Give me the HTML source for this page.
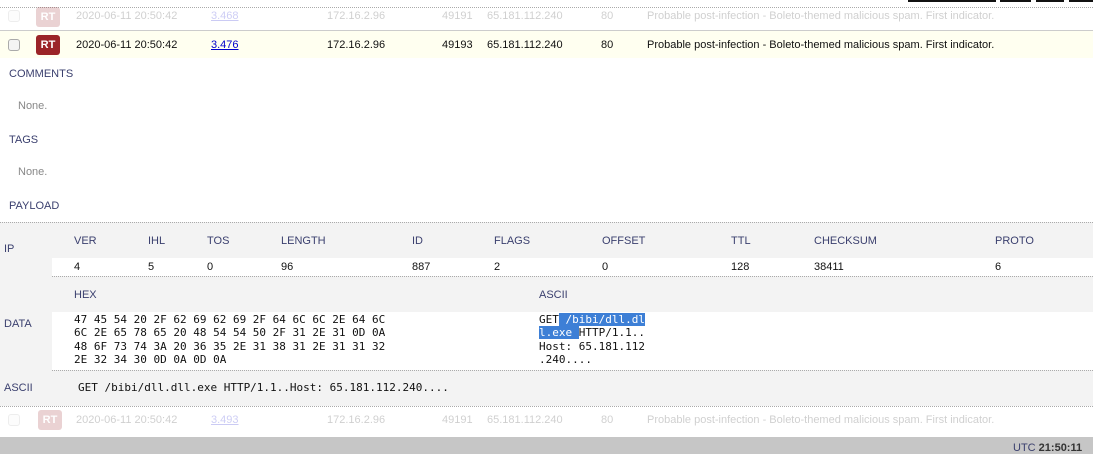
<!DOCTYPE html>
<html><head><meta charset="utf-8"><style>
*{margin:0;padding:0;box-sizing:border-box}
body{width:1093px;height:454px;overflow:hidden;background:#fff;font-family:"Liberation Sans",sans-serif;font-size:11px;color:#111;position:relative}
.a{position:absolute;white-space:nowrap}
.m{font-family:"DejaVu Sans Mono","Liberation Mono",monospace;font-size:11px}
.lb{color:#3a3f6e}
.cb{position:absolute;width:12px;height:12px;border:1px solid #aaa;border-radius:3px;background:#f4f4f4}
.rt{position:absolute;width:24px;height:20px;border-radius:3px;background:#9b2428;color:#fff;font-weight:bold;font-size:11px;text-align:center;line-height:20px}
.f{opacity:.2}
.dot{position:absolute;height:0;border-top:1px dotted #aaa}
</style></head><body>
<div class="a" style="left:908px;top:0;width:88px;height:2px;background:#111"></div>
<div class="a" style="left:1000px;top:0;width:31px;height:2px;background:#111"></div>
<div class="a" style="left:1036px;top:0;width:28px;height:2px;background:#111"></div>
<div class="a" style="left:1069px;top:0;width:24px;height:2px;background:#111"></div>
<div class="dot" style="left:0;top:7px;width:1093px"></div>
<div class="f">
<div class="cb" style="left:8px;top:10px"></div>
<div class="rt" style="left:36px;top:7px">RT</div>
<div class="a" style="left:76px;top:10px">2020-06-11 20:50:42</div>
<div class="a" style="left:211px;top:10px;color:#00c;text-decoration:underline">3.468</div>
<div class="a" style="left:327px;top:10px">172.16.2.96</div>
<div class="a" style="left:442px;top:10px">49191</div>
<div class="a" style="left:487px;top:10px">65.181.112.240</div>
<div class="a" style="left:601px;top:10px">80</div>
<div class="a" style="left:647px;top:10px">Probable post-infection - Boleto-themed malicious spam. First indicator.</div>
</div>
<div class="a" style="left:0;top:30px;width:1093px;height:28px;background:#fffff0;border-top:1px solid #ccc"></div>
<div class="cb" style="left:8px;top:39px"></div>
<div class="rt" style="left:36px;top:35px">RT</div>
<div class="a" style="left:76px;top:39px">2020-06-11 20:50:42</div>
<div class="a" style="left:211px;top:39px;color:#00c;text-decoration:underline">3.476</div>
<div class="a" style="left:327px;top:39px">172.16.2.96</div>
<div class="a" style="left:442px;top:39px">49193</div>
<div class="a" style="left:487px;top:39px">65.181.112.240</div>
<div class="a" style="left:601px;top:39px">80</div>
<div class="a" style="left:647px;top:39px">Probable post-infection - Boleto-themed malicious spam. First indicator.</div>
<div class="a lb" style="left:9px;top:68px">COMMENTS</div>
<div class="a" style="left:18px;top:100px;color:#888">None.</div>
<div class="a lb" style="left:9px;top:134px">TAGS</div>
<div class="a" style="left:18px;top:166px;color:#888">None.</div>
<div class="a lb" style="left:9px;top:200px">PAYLOAD</div>
<div class="a" style="left:0;top:222px;width:1093px;height:184px;background:#f3f3f3"></div>
<div class="dot" style="left:0;top:222px;width:1093px"></div>
<div class="a" style="left:52px;top:258px;width:1041px;height:18px;background:#fff"></div>
<div class="dot" style="left:52px;top:276px;width:1041px"></div>
<div class="a" style="left:52px;top:312px;width:1041px;height:58px;background:#fff"></div>
<div class="dot" style="left:52px;top:370px;width:1041px"></div>
<div class="dot" style="left:0;top:406px;width:1093px"></div>
<div class="a lb" style="left:4px;top:243px">IP</div>
<div class="a lb" style="left:74px;top:235px">VER</div><div class="a lb" style="left:148px;top:235px">IHL</div><div class="a lb" style="left:207px;top:235px">TOS</div><div class="a lb" style="left:281px;top:235px">LENGTH</div><div class="a lb" style="left:412px;top:235px">ID</div><div class="a lb" style="left:494px;top:235px">FLAGS</div><div class="a lb" style="left:602px;top:235px">OFFSET</div><div class="a lb" style="left:731px;top:235px">TTL</div><div class="a lb" style="left:814px;top:235px">CHECKSUM</div><div class="a lb" style="left:995px;top:235px">PROTO</div>
<div class="a" style="left:74px;top:261px">4</div><div class="a" style="left:148px;top:261px">5</div><div class="a" style="left:207px;top:261px">0</div><div class="a" style="left:281px;top:261px">96</div><div class="a" style="left:412px;top:261px">887</div><div class="a" style="left:494px;top:261px">2</div><div class="a" style="left:602px;top:261px">0</div><div class="a" style="left:731px;top:261px">128</div><div class="a" style="left:814px;top:261px">38411</div><div class="a" style="left:995px;top:261px">6</div>
<div class="a lb" style="left:74px;top:289px">HEX</div><div class="a lb" style="left:539px;top:289px">ASCII</div>
<div class="a lb" style="left:4px;top:318px">DATA</div>
<div class="a m" style="left:74px;top:313px;line-height:13.3px">47 45 54 20 2F 62 69 62 69 2F 64 6C 6C 2E 64 6C<br>6C 2E 65 78 65 20 48 54 54 50 2F 31 2E 31 0D 0A<br>48 6F 73 74 3A 20 36 35 2E 31 38 31 2E 31 31 32<br>2E 32 34 30 0D 0A 0D 0A</div>
<div class="a m" style="left:539px;top:313px;line-height:13.3px">GET<span style="background:#3d7fd6;color:#fff"> /bibi/dll.dl </span><br><span style="background:#3d7fd6;color:#fff">l.exe </span>HTTP/1.1..<br>Host: 65.181.112<br>.240....</div>
<div class="a lb" style="left:4px;top:382px">ASCII</div>
<div class="a m" style="left:78px;top:381px">GET /bibi/dll.dll.exe HTTP/1.1..Host: 65.181.112.240....</div>
<div class="f">
<div class="cb" style="left:8px;top:414px"></div>
<div class="rt" style="left:38px;top:410px">RT</div>
<div class="a" style="left:76px;top:414px">2020-06-11 20:50:42</div>
<div class="a" style="left:211px;top:414px;color:#00c;text-decoration:underline">3.493</div>
<div class="a" style="left:327px;top:414px">172.16.2.96</div>
<div class="a" style="left:442px;top:414px">49191</div>
<div class="a" style="left:487px;top:414px">65.181.112.240</div>
<div class="a" style="left:601px;top:414px">80</div>
<div class="a" style="left:647px;top:414px">Probable post-infection - Boleto-themed malicious spam. First indicator.</div>
</div>
<div class="a" style="left:0;top:437px;width:1093px;height:17px;background:#c6c6c6"></div>
<div class="a lb" style="left:1013px;top:442px">UTC <b style="color:#333">21:50:11</b></div>
</body></html>
